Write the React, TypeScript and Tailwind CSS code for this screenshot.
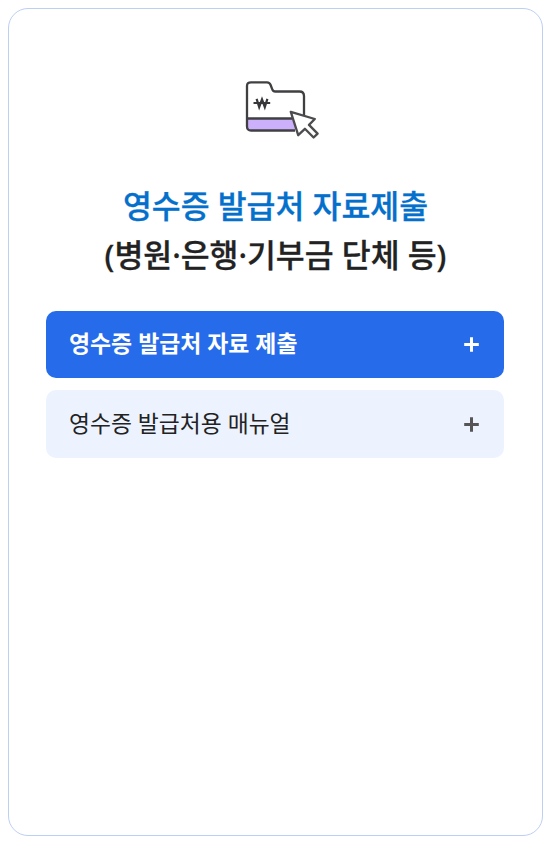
import { useState } from "react";

type MenuItem = {
  label: string;
  primary: boolean;
};

const items: MenuItem[] = [
  { label: "영수증 발급처 자료 제출", primary: true },
  { label: "영수증 발급처용 매뉴얼", primary: false },
];

function FolderIcon() {
  return (
    <svg className="ml-3" width="74" height="60" viewBox="0 0 74 60" fill="none" aria-hidden="true">
      <path
        d="M2 38.5H50V50.5H6C3.5 50.5 2 49 2 46.5Z"
        fill="#ccb0fb"
      />
      <path
        d="M50 50.5H6C3.5 50.5 2 49 2 46.5V6C2 3.5 3.5 2.3 6 2.3H22C24 2.3 25 3 25.6 5L27.3 9.3C27.8 10.8 28.5 11.5 30.2 11.5H54.5C57.5 11.5 59 13 59 16V36M2 38.5H47"
        stroke="#404043"
        strokeWidth="2.3"
      />
      <path
        d="M11.6 18.8L14.2 27L17 19.4L19.8 27L22.4 18.8M8.5 23H25.2"
        stroke="#38383b"
        strokeWidth="2.2"
      />
      <path
        d="M45.8 31.8L69.8 39L64 44.9L72.6 53.6L68.6 57.5L59.9 48.8L53.2 55.2Z"
        fill="#fff"
        stroke="#4c4c4f"
        strokeWidth="2.3"
        strokeLinejoin="round"
      />
    </svg>
  );
}

function PlusIcon() {
  return (
    <svg width="15" height="15" viewBox="0 0 15 15" fill="none" aria-hidden="true">
      <path d="M7.5 0.2V14.8M0.2 7.5H14.8" stroke="currentColor" strokeWidth="3" />
    </svg>
  );
}

export default function App() {
  const [open, setOpen] = useState<string | null>(null);

  return (
    <main className="h-[841px] overflow-hidden bg-white pl-2 pt-2 font-['Noto_Sans','Noto_Sans_CJK_KR',sans-serif]">
      <section className="flex h-[828px] w-[535px] flex-col items-center rounded-[20px] border border-[#bccff5] px-[37px] pt-[71px]">
        <FolderIcon />
        <h2 className="mt-[41px] whitespace-nowrap text-center text-[31.4px] font-medium leading-[49px] text-[#222] [-webkit-text-stroke:0.3px]">
          <span className="text-[#0370cc]">영수증 발급처 자료제출</span>
          <br />
          (병원·은행·기부금 단체 등)
        </h2>
        <ul className="mt-8 flex w-full flex-col gap-3">
          {items.map((item) => (
            <li key={item.label}>
              <button
                type="button"
                aria-expanded={open === item.label}
                onClick={() => setOpen(open === item.label ? null : item.label)}
                className={`flex w-[458px] items-center justify-between rounded-[10px] pl-[23px] pr-[25px] leading-8 ${
                  item.primary
                    ? "h-[67px] bg-[#256bea] text-[22.9px] font-semibold text-white"
                    : "h-[68px] bg-[#ecf3ff] text-[22.8px] font-normal text-[#222]"
                }`}
              >
                <span className={item.primary ? "pb-px" : ""}>{item.label}</span>
                <span className={item.primary ? "pb-px text-white" : "text-[#555]"}>
                  <PlusIcon />
                </span>
              </button>
            </li>
          ))}
        </ul>
      </section>
    </main>
  );
}
